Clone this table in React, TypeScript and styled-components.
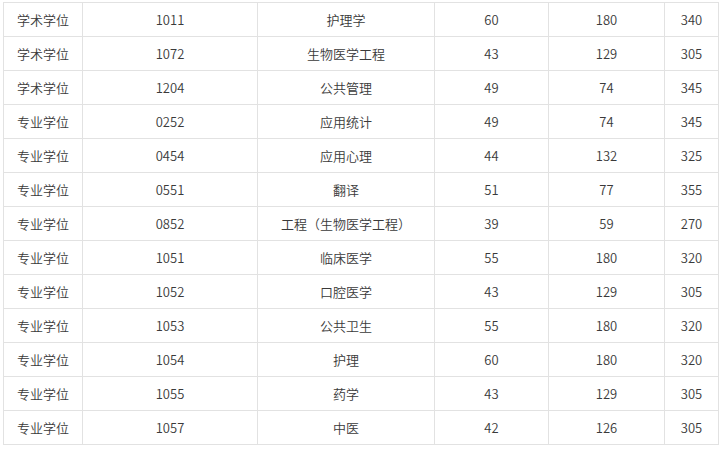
import React from "react";
import styled, { createGlobalStyle } from "styled-components";

const GlobalStyle = createGlobalStyle`
  html, body {
    margin: 0;
    padding: 0;
    background: #ffffff;
  }
`;

const rows: string[][] = [
  ["学术学位", "1011", "护理学", "60", "180", "340"],
  ["学术学位", "1072", "生物医学工程", "43", "129", "305"],
  ["学术学位", "1204", "公共管理", "49", "74", "345"],
  ["专业学位", "0252", "应用统计", "49", "74", "345"],
  ["专业学位", "0454", "应用心理", "44", "132", "325"],
  ["专业学位", "0551", "翻译", "51", "77", "355"],
  ["专业学位", "0852", "工程（生物医学工程）", "39", "59", "270"],
  ["专业学位", "1051", "临床医学", "55", "180", "320"],
  ["专业学位", "1052", "口腔医学", "43", "129", "305"],
  ["专业学位", "1053", "公共卫生", "55", "180", "320"],
  ["专业学位", "1054", "护理", "60", "180", "320"],
  ["专业学位", "1055", "药学", "43", "129", "305"],
  ["专业学位", "1057", "中医", "42", "126", "305"],
];

const colWidths = [79, 175, 177, 114, 116, 54];

const Page = styled.div`
  padding: 2px 0 0 3px;
`;

const Table = styled.table`
  border-collapse: collapse;
  table-layout: fixed;
  width: 715px;
  font-family: "Noto Sans CJK SC", "Microsoft YaHei", sans-serif;
  font-size: 13px;
  font-weight: 350;
  color: #3a3a3a;
`;

const Cell = styled.td`
  height: 33px;
  padding: 0;
  border: 1px solid #e2e2e2;
  text-align: center;
  vertical-align: middle;
  white-space: nowrap;
  line-height: 33px;
`;

export default function App() {
  return (
    <>
      <GlobalStyle />
      <Page>
        <Table>
          <colgroup>
            {colWidths.map((w, i) => (
              <col key={i} style={{ width: w }} />
            ))}
          </colgroup>
          <tbody>
            {rows.map((r, i) => (
              <tr key={i}>
                {r.map((c, j) => (
                  <Cell key={j}>{c}</Cell>
                ))}
              </tr>
            ))}
          </tbody>
        </Table>
      </Page>
    </>
  );
}
